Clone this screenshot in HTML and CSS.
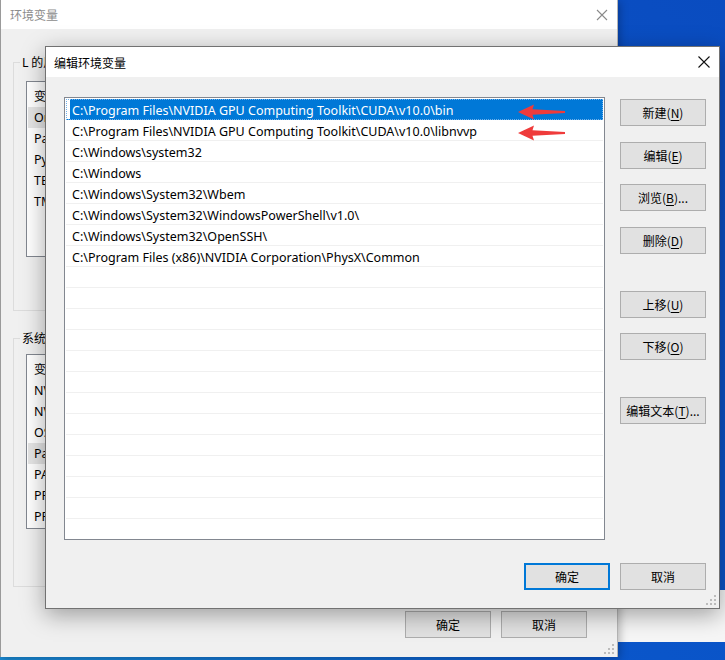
FILE: index.html
```html
<!DOCTYPE html>
<html lang="zh-CN">
<head>
<meta charset="utf-8">
<title>编辑环境变量</title>
<link rel="stylesheet" href="styles.css">
</head>
<body>
<div class="desktop">
  <div class="other-win"></div>

  <div class="bgwin">
    <div class="bg-title">
      <span class="bg-title-text">环境变量</span>
      <svg class="bg-close" width="12" height="12" viewBox="0 0 12 12"><path d="M1 1L11 11M11 1L1 11" stroke="#8a8a8a" stroke-width="1.1" fill="none"/></svg>
    </div>
    <div class="bg-body">
      <fieldset class="group g1">
        <legend>L 的用户变量(U)</legend>
        <div class="bg-list l1">
          <div class="bg-row head">变量</div>
          <div class="bg-row sel">OneDrive</div>
          <div class="bg-row">Path</div>
          <div class="bg-row">PyCharm</div>
          <div class="bg-row">TEMP</div>
          <div class="bg-row">TMP</div>
        </div>
      </fieldset>
      <fieldset class="group g2">
        <legend>系统变量(S)</legend>
        <div class="bg-list l2">
          <div class="bg-row head">变量</div>
          <div class="bg-row">NVCUDASAMPLES_ROOT</div>
          <div class="bg-row">NVCUDASAMPLES10_0_ROOT</div>
          <div class="bg-row">OS</div>
          <div class="bg-row sel">Path</div>
          <div class="bg-row">PATHEXT</div>
          <div class="bg-row">PROCESSOR_ARCHITECTURE</div>
          <div class="bg-row">PROCESSOR_IDENTIFIER</div>
        </div>
      </fieldset>
      <div class="bg-actions">
        <div class="btn">确定</div>
        <div class="btn">取消</div>
      </div>
      <svg class="grip bg-grip" width="10" height="10" viewBox="0 0 10 10"><g fill="#bcbcbc"><rect x="8" y="0" width="2" height="2"/><rect x="4" y="4" width="2" height="2"/><rect x="8" y="4" width="2" height="2"/><rect x="0" y="8" width="2" height="2"/><rect x="4" y="8" width="2" height="2"/><rect x="8" y="8" width="2" height="2"/></g></svg>
    </div>
  </div>

  <div class="dialog">
    <div class="dlg-title">
      <span class="dlg-title-text">编辑环境变量</span>
      <svg class="dlg-close" width="12" height="12" viewBox="0 0 12 12"><path d="M0.5 0.5L11.5 11.5M11.5 0.5L0.5 11.5" stroke="#111" stroke-width="1.1" fill="none"/></svg>
    </div>
    <div class="dlg-body">
      <div class="dlg-main">
        <div class="list">
          <div class="row selected">C:\Program Files\NVIDIA GPU Computing Toolkit\CUDA\v10.0\bin</div>
          <div class="row">C:\Program Files\NVIDIA GPU Computing Toolkit\CUDA\v10.0\libnvvp</div>
          <div class="row">C:\Windows\system32</div>
          <div class="row">C:\Windows</div>
          <div class="row">C:\Windows\System32\Wbem</div>
          <div class="row">C:\Windows\System32\WindowsPowerShell\v1.0\</div>
          <div class="row">C:\Windows\System32\OpenSSH\</div>
          <div class="row">C:\Program Files (x86)\NVIDIA Corporation\PhysX\Common</div>
          <div class="row"></div><div class="row"></div><div class="row"></div><div class="row"></div>
          <div class="row"></div><div class="row"></div><div class="row"></div><div class="row"></div>
          <div class="row"></div><div class="row"></div><div class="row"></div><div class="row"></div>
          <div class="row"></div>
        </div>
        <div class="side">
          <div class="btn b-new">新建(<u>N</u>)</div>
          <div class="btn b-edit">编辑(<u>E</u>)</div>
          <div class="btn b-browse">浏览(<u>B</u>)...</div>
          <div class="btn b-del">删除(<u>D</u>)</div>
          <div class="btn b-up">上移(<u>U</u>)</div>
          <div class="btn b-down">下移(<u>O</u>)</div>
          <div class="btn b-text">编辑文本(<u>T</u>)...</div>
        </div>
      </div>
      <div class="dlg-actions">
        <div class="btn default">确定</div>
        <div class="btn">取消</div>
      </div>
      <svg class="grip dlg-grip" width="10" height="10" viewBox="0 0 10 10"><g fill="#bcbcbc"><rect x="8" y="0" width="2" height="2"/><rect x="4" y="4" width="2" height="2"/><rect x="8" y="4" width="2" height="2"/><rect x="0" y="8" width="2" height="2"/><rect x="4" y="8" width="2" height="2"/><rect x="8" y="8" width="2" height="2"/></g></svg>
    </div>
  </div>

  <svg class="arrow a1" width="48" height="16" viewBox="0 0 48 16"><path d="M0 8 L16 0.5 L14.5 5.3 L47 7 L47 9 L14.5 10.7 L16 15.5 Z" fill="#ef3b3b"/></svg>
  <svg class="arrow a2" width="48" height="16" viewBox="0 0 48 16"><path d="M0 8 L16 0.5 L14.5 5.3 L47 7 L47 9 L14.5 10.7 L16 15.5 Z" fill="#ef3b3b"/></svg>
</div>
</body>
</html>
```

FILE: styles.css
```css
* { box-sizing: border-box; }
html, body { margin: 0; padding: 0; }
body {
  width: 725px;
  height: 660px;
  overflow: hidden;
  font-family: "Noto Sans", "Noto Sans CJK SC", sans-serif;
  font-size: 12px;
  color: #000;
}
.desktop {
  position: relative;
  width: 725px;
  height: 660px;
  background: linear-gradient(to bottom left, #0a4cc0 0%, #0a56ca 60%, #1a8ad4 100%);
  overflow: hidden;
}
.other-win {
  position: absolute;
  left: 600px;
  top: 590px;
  width: 140px;
  height: 52px;
  background: #f6f6f6;
}

/* background window */
.bgwin {
  position: absolute;
  left: 0;
  top: 0;
  width: 618px;
  height: 657px;
  background: #f0f0f0;
  border-left: 1px solid #9a9a9a;
  border-right: 1px solid #b5b5b5;
  box-shadow: 2px 2px 8px rgba(0,0,0,0.25);
}
.bg-title {
  height: 29px;
  background: #fff;
  display: flex;
  align-items: center;
  justify-content: space-between;
  padding: 0 9px 0 9px;
}
.bg-title-text {
  color: #8c8c8c;
  font-family: "Noto Sans CJK SC", sans-serif;
  font-size: 12px;
}
.bg-body {
  position: relative;
  height: 628px;
  padding: 26px 0 0 12px;
}
.group {
  margin: 0;
  border: 1px solid #dcdcdc;
  padding: 0 0 0 12px;
  width: 590px;
}
.group legend {
  padding: 0 2px;
  margin-left: -6px;
  font-family: "Noto Sans CJK SC", sans-serif;
  font-size: 12px;
  line-height: 14px;
}
.g1 { height: 256px; }
.g2 { height: 256px; margin-top: 20px; }
.bg-list {
  width: 574px;
  background: #fff;
  border: 1px solid #828790;
  padding-top: 2px;
  margin-top: 12px;
}
.l1 { height: 176px; }
.l2 { height: 175px; margin-top: 9px; }
.bg-row {
  height: 21px;
  line-height: 21px;
  padding-left: 6px;
  margin-left: 1px;
  white-space: nowrap;
  overflow: hidden;
  font-size: 12.5px;
}
.bg-row.head { height: 23px; line-height: 23px; font-family: "Noto Sans CJK SC", sans-serif; font-size: 12px; }
.bg-row.sel { background: #e5e5e5; }
.bg-actions {
  display: flex;
  gap: 10px;
  justify-content: flex-end;
  padding-right: 30px;
  margin-top: 24px;
}
.bg-actions .btn { width: 86px; }
.bg-grip { position: absolute; right: 3px; bottom: 3px; }

/* dialog */
.dialog {
  position: absolute;
  left: 45px;
  top: 46px;
  width: 675px;
  height: 563px;
  background: #f0f0f0;
  border: 1px solid #727272;
  box-shadow: 0 6px 22px rgba(0,0,0,0.35);
}
.dlg-title {
  height: 30px;
  background: #fff;
  display: flex;
  align-items: center;
  justify-content: space-between;
  padding: 0 9px 0 8px;
}
.dlg-title-text {
  font-family: "Noto Sans CJK SC", sans-serif;
  font-size: 12px;
}
.dlg-body {
  position: relative;
  padding: 20px 13px 0 18px;
  height: 531px;
}
.dlg-main {
  display: flex;
  gap: 15px;
}
.list {
  width: 541px;
  height: 443px;
  background: #fff;
  border: 1px solid #828790;
  padding: 1px;
  overflow: hidden;
}
.row {
  height: 21px;
  line-height: 24px;
  padding-left: 6px;
  border-bottom: 1px solid #f0f0f0;
  white-space: nowrap;
  overflow: hidden;
  font-size: 12.5px;
}
.row.selected {
  background: #0078d7;
  color: #fff;
  box-shadow: inset 4px 0 0 #fff;
  border-bottom-color: #0078d7;
  outline: 1px dotted #6fb0ea;
  outline-offset: -1px;
}
.side {
  display: flex;
  flex-direction: column;
  padding-top: 2px;
}
.side .btn { width: 86px; }
.b-edit { margin-top: 16px; }
.b-browse { margin-top: 15px; }
.b-del { margin-top: 16px; }
.b-up { margin-top: 37px; }
.b-down { margin-top: 15px; }
.b-text { margin-top: 37px; }
.btn {
  height: 27px;
  background: #e1e1e1;
  border: 1px solid #adadad;
  display: flex;
  align-items: center;
  justify-content: center;
  font-family: "Noto Sans CJK SC", sans-serif;
  font-size: 12px;
  white-space: nowrap;
}
.btn u { text-decoration: underline; text-underline-offset: 2px; }
.dlg-actions {
  display: flex;
  justify-content: flex-end;
  gap: 10px;
  margin-top: 23px;
}
.dlg-actions .btn { width: 86px; }
.btn.default { border: 2px solid #0078d7; }
.dlg-grip { position: absolute; right: 3px; bottom: 3px; }

.arrow { position: absolute; }
.a1 { left: 518px; top: 104px; }
.a2 { left: 518px; top: 125px; }
```
